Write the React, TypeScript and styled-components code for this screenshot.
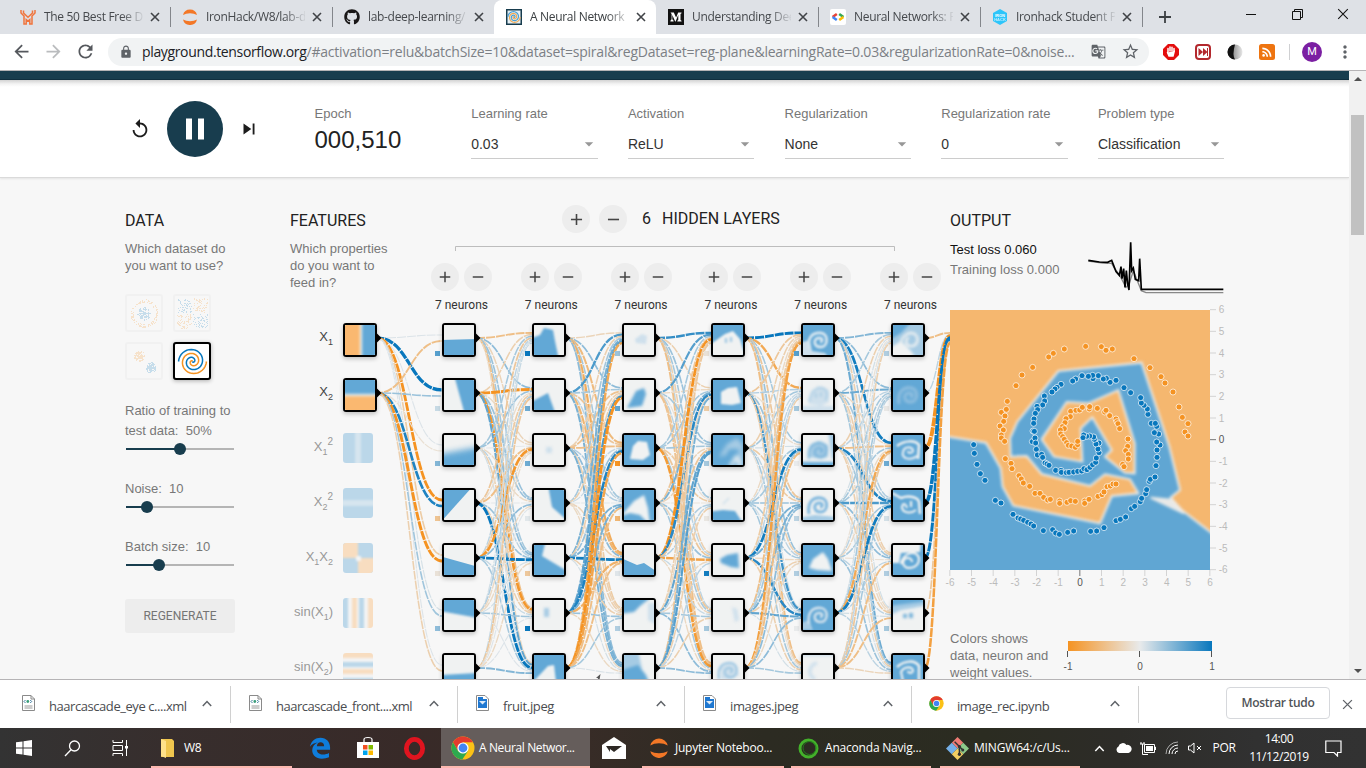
import React from 'react';
import styled, { createGlobalStyle } from 'styled-components';
import {
  MdArrowBack, MdArrowForward, MdRefresh, MdLock, MdStarBorder, MdGTranslate, MdMoreVert,
  MdReplay, MdPause, MdSkipNext, MdAdd, MdRemove, MdArrowDropDown, MdRssFeed,
} from 'react-icons/md';
import { FaGithub } from 'react-icons/fa';

const SEGOE = '"Open Sans", "Noto Sans", sans-serif';
const ARIAL = '"Liberation Sans", Arial, sans-serif';
const BLUE = '#62a8d6';
const ORANGE = '#fab870';

const Global = createGlobalStyle`
  * { box-sizing: border-box; }
  body { margin: 0; width: 1366px; height: 768px; overflow: hidden; background: #fff; font-family: ${ARIAL}; }
  svg { display: block; flex: none; }
`;

const Screen = styled.div`
  width: 1366px;
  height: 768px;
  display: flex;
  flex-direction: column;
  overflow: hidden;
`;

/* ---------- browser chrome ---------- */

const TabStrip = styled.div`
  height: 34px;
  flex: none;
  display: flex;
  padding-left: 8px;
  background: #dee1e6;
`;

const TabBox = styled.div<{ $active?: boolean; $line?: boolean }>`
  position: relative;
  width: 162px;
  height: 34px;
  display: flex;
  align-items: center;
  padding: 0 9px 0 12px;
  background: ${(p) => (p.$active ? '#fff' : 'transparent')};
  border-radius: 8px 8px 0 0;
  &::after {
    content: '';
    position: absolute;
    right: -1px;
    top: 7px;
    width: 1px;
    height: 20px;
    background: ${(p) => (p.$line ? '#83868b' : 'transparent')};
  }
`;

const TabTitle = styled.div<{ $active?: boolean }>`
  width: 99px;
  margin-left: 8px;
  overflow: hidden;
  white-space: nowrap;
  font: 12px/20px ${SEGOE};
  letter-spacing: -0.32px;
  color: ${(p) => (p.$active ? '#3c4043' : '#45484c')};
  mask-image: linear-gradient(90deg, #000 78%, transparent 102%);
`;

const Spacer = styled.div`
  flex: 1;
`;

const TabClose = styled.div`
  margin-left: 7px;
`;

const NewTab = styled.div`
  width: 46px;
  display: flex;
  align-items: center;
  justify-content: center;
`;

const WindowButton = styled.div`
  width: 46px;
  height: 28px;
  display: flex;
  align-items: center;
  justify-content: center;
`;

const Toolbar = styled.div`
  height: 37px;
  flex: none;
  display: flex;
  align-items: center;
  padding: 0 0 1px 11px;
  background: #fff;
  border-bottom: 1px solid #b6b4b6;
`;

const NavButton = styled.div<{ $dim?: boolean }>`
  width: 32px;
  color: ${(p) => (p.$dim ? '#babcbe' : '#55585d')};
`;

const Omnibox = styled.div`
  width: 1041px;
  height: 28px;
  margin-left: 1px;
  display: flex;
  align-items: center;
  padding: 0 9px 0 11px;
  border-radius: 14px;
  background: #f1f3f4;
  color: #5f6368;
`;

const Url = styled.div`
  margin-left: 9px;
  flex: 1;
  white-space: nowrap;
  font: 14px/20px ${SEGOE};
  letter-spacing: -0.213px;
  color: #7c8085;
  b { font-weight: 400; color: #202124; letter-spacing: -0.35px; }
`;

const OmniIcon = styled.div`
  margin-left: 15px;
`;

const Extensions = styled.div`
  display: flex;
  align-items: center;
  padding-left: 14px;
  gap: 16px;
`;

const Divider = styled.div`
  width: 1px;
  height: 16px;
  margin-left: -2px;
  background: #cfd0d2;
`;

const Avatar = styled.div`
  width: 20px;
  height: 20px;
  margin-left: -4px;
  border-radius: 50%;
  background: #7b1fa2;
  color: #fff;
  font: 11px/20px Roboto, sans-serif;
  text-align: center;
`;

const MenuDots = styled.div`
  margin-left: -3px;
  color: #5f6368;
`;

/* ---------- page ---------- */

const Viewport = styled.div`
  height: 608px;
  flex: none;
  display: flex;
  overflow: hidden;
`;

const Page = styled.div`
  width: 1349px;
  height: 608px;
  overflow: hidden;
  background: #f7f7f7;
`;

const HeaderBand = styled.div`
  height: 9px;
  background: #193d4e;
  border-bottom: 1px solid #123040;
`;

const Controls = styled.div`
  height: 98px;
  display: flex;
  padding-left: 129px;
  background: linear-gradient(#d3d3d3, #f4f4f4 4px, #fff 7px);
  border-bottom: 1px solid #dadada;
  box-shadow: 0 1px 2px rgba(0, 0, 0, 0.08);
`;

const Playback = styled.div`
  display: flex;
  align-items: center;
  width: 185.5px;
  color: #1c1c1c;
`;

const PlayButton = styled.div`
  width: 56px;
  height: 56px;
  margin: 0 15px 0 16px;
  display: flex;
  align-items: center;
  justify-content: center;
  border-radius: 50%;
  background: #183d4e;
  color: #fff;
`;

const ControlLabel = styled.div`
  margin-top: 25px;
  font: 13px/17px ${ARIAL};
  color: #777;
  white-space: nowrap;
`;

const Epoch = styled.div`
  width: 156.7px;
`;

const EpochValue = styled.div`
  margin-top: 4px;
  font: 24px/28px ${ARIAL};
  color: #222;
`;

const SelectBox = styled.div`
  width: 156.7px;
`;

const SelectValue = styled.div`
  width: 126.500px;
  height: 29px;
  margin-top: 8px;
  padding-bottom: 1px;
  display: flex;
  align-items: center;
  justify-content: space-between;
  border-bottom: 1px solid #ccc;
  font: 14px/20px ${ARIAL};
  color: #333;
  svg { color: #979797; margin-right: -1px; }
`;

const Main = styled.div`
  display: grid;
  grid-template-columns: 165px 660px 1fr;
  padding: 0 0 0 125px;
  height: 501px;
`;

const Column = styled.div`
  position: relative;
  padding-top: 32px;
`;

const Heading = styled.h3`
  margin: 0 0 8px;
  font: 400 16px/22px Roboto, sans-serif;
  color: #222;
`;

const Blurb = styled.p<{ $w: number }>`
  margin: 0;
  width: ${(p) => p.$w}px;
  font: 13px/17px ${ARIAL};
  color: #777;
`;

const Datasets = styled.div`
  display: grid;
  grid-template-columns: 38px 38px;
  gap: 10px;
  margin-top: 20px;
`;

const Dataset = styled.div<{ $on?: boolean }>`
  width: 38px;
  height: 38px;
  border-radius: 3px;
  border: 2px solid ${(p) => (p.$on ? '#000' : '#f1f1f1')};
  background: ${(p) => (p.$on ? '#fff' : 'transparent')};
  box-shadow: ${(p) => (p.$on ? '0 1px 4px rgba(0,0,0,.3)' : 'none')};
`;

const SliderLabel = styled.div`
  margin: 21px 0 -1px;
  font: 13px/20px ${ARIAL};
  color: #777;
  white-space: pre;
`;

const Track = styled.div<{ $at: number }>`
  position: relative;
  width: 108px;
  height: 18px;
  margin-left: 1px;
  background: linear-gradient(90deg, #183d4e ${(p) => p.$at}px, #b5b5b5 ${(p) => p.$at}px) 0 8px / 100% 2px no-repeat;
  &::after {
    content: '';
    position: absolute;
    left: ${(p) => p.$at - 6}px;
    top: 3px;
    width: 12px;
    height: 12px;
    border-radius: 50%;
    background: #183d4e;
  }
`;

const Regenerate = styled.div`
  width: 110px;
  height: 34px;
  margin-top: 25px;
  border-radius: 3px;
  background: #ededed;
  color: #757575;
  font: 400 12px/34px Roboto, sans-serif;
  text-align: center;
`;

/* ---------- network diagram ---------- */

const Diagram = styled.svg`
  position: absolute;
  left: 0;
  top: 0;
`;

const NodeBox = styled.div<{ $x: number; $y: number; $off?: boolean }>`
  position: absolute;
  left: ${(p) => p.$x - 290}px;
  top: ${(p) => p.$y - 178}px;
  width: ${(p) => (p.$off ? 30 : 34)}px;
  height: ${(p) => (p.$off ? 30 : 34)}px;
  border: ${(p) => (p.$off ? '0' : '2px solid #000')};
  border-radius: 3px;
  overflow: hidden;
  opacity: ${(p) => (p.$off ? 0.4 : 1)};
  box-shadow: ${(p) => (p.$off ? 'none' : '0 2px 4px rgba(0,0,0,.22)')};
`;

const RoundButton = styled.div`
  width: 28px;
  height: 28px;
  display: flex;
  align-items: center;
  justify-content: center;
  border-radius: 50%;
  background: #ededed;
  color: #444;
`;

const LayersHeader = styled.div`
  position: absolute;
  left: 272px;
  top: 27px;
  height: 28px;
  display: flex;
  align-items: center;
  gap: 9px;
  font: 400 16px/20px Roboto, sans-serif;
  color: #222;
  span { margin-left: 6px; }
  em { font-style: normal; margin-left: 2px; }
`;

const LayerControl = styled.div<{ $x: number }>`
  position: absolute;
  left: ${(p) => p.$x - 290}px;
  top: 85px;
  width: 61px;
`;

const LayerButtons = styled.div`
  display: flex;
  gap: 5px;
`;

const NeuronCount = styled.div`
  margin-top: 5px;
  font: 12px/18px Roboto, sans-serif;
  text-align: center;
  color: #333;
`;

type Shape = [string, string];
type Tile = { bg: string; blur: number; fills?: Shape[]; lines?: [string, string, number][] };

const W = '#f0f2f2';
const M = '#a6cbe4';
const L = '#cfe0ec';
const SPIRAL = 'M6 24C4 12 10 7 18 8C26 9 25 22 18 22C10 22 10 13 16 13C20 13 20 17 17 17';
const ARCH = 'M6 22C8 12 13 7 19 8C25 9 25 17 22 20M13 18V13M18 17V12';

const t = (bg: string, blur: number, fills: Shape[] = [], lines: [string, string, number][] = []): Tile =>
  ({ bg, blur, fills, lines });

const TILES: Tile[][] = [
  [
    t(W, 0.7, [[BLUE, 'M-5 15L35 14V35H-5Z']]),
    t(W, 0.8, [[BLUE, 'M10 -5H35V35H21Z']]),
    t(W, 3.2, [[BLUE, 'M-9 20L40 11V40H-9Z']]),
    t(W, 0.6, [[BLUE, 'M-5 -5H30L-5 34Z']]),
    t(W, 0.6, [[BLUE, 'M-5 11L35 22V35H-5Z']]),
    t(W, 0.9, [[BLUE, 'M-5 -5H35V18L-5 11Z']]),
    t(W, 0.9, [[BLUE, 'M-5 20L35 18V35H-5Z']]),
  ],
  [
    t(W, 1.3, [[BLUE, 'M-5 14L6 10L10 3L15 4L19 5L21 16L25 35H-5Z']]),
    t(W, 1.1, [[BLUE, 'M-5 23L14 13L22 35H-5Z']]),
    t(W, 1.6, [[L, 'M12 12H18V18H12Z']]),
    t(W, 0.9, [[BLUE, 'M14 -5H35V32L18 17Z']]),
    t(W, 1.2, [[BLUE, 'M-5 -5H12L8 11L35 27V35H-5Z']]),
    t(W, 1.6, [[M, 'M10 8H15V17H10Z']]),
    t(BLUE, 1.1, [[W, 'M-2 28L14 11L20 10L23 35H0Z']]),
  ],
  [
    t(W, 1.3, [[L, 'M11 14L18 9L23 11L22 19L12 18Z']]),
    t(W, 1.5, [[BLUE, 'M3 28L12 11L20 8L22 14L18 26Z']]),
    t(BLUE, 1.2, [[W, 'M9 11L14 6L23 7L26 20L19 25L6 24Z']]),
    t(BLUE, 1.6, [[W, 'M-3 26L10 11L20 5L24 18L26 35L16 25L6 23Z']]),
    t(W, 0.7, [[BLUE, 'M-5 12L13 20L20 18L35 28V35H-5Z']]),
    t(W, 1.8, [[BLUE, 'M-5 -5H30L16 6L10 12L-5 14Z'], [L, 'M24 3H34V26L24 20Z']]),
    t(W, 1.5, [[M, 'M-5 -5H14L18 14H-5Z'], [BLUE, 'M-5 16L14 10L22 20L28 35H-5Z']]),
  ],
  [
    t(BLUE, 1.2, [[W, 'M-5 21L12 9L20 6L27 14L30 24L35 35H-5Z']], [['M13 18V13M18 17V12', M, 2.4]]),
    t(BLUE, 1.2, [[W, 'M8 12L15 8L24 7L28 23L19 25L8 24Z']]),
    t(BLUE, 2, [[M, 'M6 22L14 9L24 3L30 10L30 35H22L26 14L16 14L13 20Z']], [['M17 32L23 22L28 30', W, 3]]),
    t(W, 1.3, [[BLUE, 'M-5 22L10 20L22 21L31 35H-5Z']], [['M10 14L16 8', L, 1.5]]),
    t(W, 1.6, [[BLUE, 'M7 14L14 10L25 8L26 23L18 22L8 18Z']]),
    t(W, 1.6, [[L, 'M19 7L24 9L26 20L22 22Z']]),
    t(W, 1.3, [[L, 'M8 24L8 12L16 7L24 10L26 20L18 25Z']], [[SPIRAL, M, 2.4]]),
  ],
  [
    t(BLUE, 1.3, [[L, 'M-5 18L7 15L9 26L22 28L27 35H-5Z']], [[SPIRAL, '#d6e6f0', 2.8]]),
    t(W, 1.5, [[L, 'M6 24L8 11L16 6L26 10L26 22L18 26Z'], [L, 'M-5 26H35V35H-5Z']], [[ARCH, M, 1.8]]),
    t(W, 1.4, [[M, 'M6 22L8 10L16 6L25 10L25 22L18 24Z'], [BLUE, 'M-5 27H35V35H-5Z'], [M, 'M25 -5H35V24H29Z']], [[SPIRAL, BLUE, 1.6]]),
    t(W, 1.3, [[M, 'M-5 28L12 25L35 27V35H-5Z']], [[SPIRAL, '#83b9de', 3]]),
    t(BLUE, 1.6, [[W, 'M6 23L10 14L20 7L25 14L29 26L14 25Z']]),
    t(BLUE, 1.3, [[M, 'M-5 24L6 20L10 30H-5Z']], [[SPIRAL, L, 2.6]]),
    t(W, 1.4, [[L, 'M-5 -5H35V1H-5Z']], [['M14 8C6 10 4 20 12 24', L, 3.5]]),
  ],
  [
    t(M, 1.4, [[BLUE, 'M-5 -5H20L8 8L-5 16Z'], [W, 'M-5 24L8 16L18 26L24 35H-5Z']], [['M7 22C8 10 16 6 22 9C27 14 24 22 17 21C12 20 12 13 16 13', W, 2.4]]),
    t(BLUE, 1.6, [], [[SPIRAL, '#91bfdf', 3]]),
    t(BLUE, 1.1, [], [['M4 11C12 5 22 5 26 10L25 24', W, 2.5], ['M24 21C18 26 8 24 10 17C11 11 20 11 20 16C19 19 15 18 15 16', '#dfeaf2', 2.3]]),
    t(BLUE, 1.1, [], [['M-1 3L8 8C16 5 25 7 26 12L27 24', W, 2.5], ['M23 20C18 24 9 23 9 17C10 12 13 14 14 18M18 11V17', W, 2.1]]),
    t(BLUE, 1.1, [[W, 'M-5 -5H28L27 7L8 8L6 18L-5 18Z']], [['M8 19C10 7 25 4 26 14C26 24 11 26 10 18C11 11 19 12 19 17', W, 2.2]]),
    t(W, 1.6, [[M, 'M-5 -5H35V5L20 8L8 10L-5 16Z'], [BLUE, 'M-5 -5H35V1L-5 6Z']], [['M12 18V14M18 18V13', BLUE, 3.4]]),
    t(BLUE, 1.1, [], [['M4 12C12 5 22 5 26 11L26 30', W, 2.5], ['M10 26L8 17C11 11 20 11 20 16C19 19 15 18 15 16', W, 2.1]]),
  ],
];

const FEATURE_TILES: Tile[] = [
  t(W, 1.4, [[ORANGE, 'M-5 -5H15V35H-5Z'], [BLUE, 'M17 -5H35V35H17Z']]),
  t(W, 1.4, [[BLUE, 'M-5 -5H35V14H-5Z'], [ORANGE, 'M-5 16H35V35H-5Z']]),
  t(BLUE, 0.8, [[M, 'M12 -5H18V35H12Z']]),
  t(BLUE, 0.8, [[M, 'M-5 12H35V18H-5Z']]),
  t(BLUE, 0.8, [[ORANGE, 'M-5 -5H15V15H-5ZM15 15H35V35H15Z'], [W, 'M13 13H18V18H13Z']]),
  t(W, 1.2, [[BLUE, 'M-5 -5H5V35H-5ZM16 -5H21V35H16Z'], [ORANGE, 'M9 -5H14V35H9ZM25 -5H35V35H25Z']]),
  t(W, 1.2, [[ORANGE, 'M-5 -5H35V5H-5ZM-5 16H35V21H-5Z'], [BLUE, 'M-5 9H35V14H-5ZM-5 25H35V35H-5Z']]),
];

const Heat = ({ tile, id }: { tile: Tile; id: string }) => (
  <svg width="30" height="30" viewBox="0 0 30 30">
    <filter id={id} x="-20" y="-20" width="70" height="70" filterUnits="userSpaceOnUse" colorInterpolationFilters="sRGB">
      <feGaussianBlur stdDeviation={tile.blur} />
    </filter>
    <rect width="30" height="30" fill={tile.bg} />
    <g filter={`url(#${id})`}>
      {(tile.fills || []).map(([c, d], i) => <path key={i} d={d} fill={c} />)}
      {(tile.lines || []).map(([d, c, w], i) => <path key={i} d={d} stroke={c} strokeWidth={w} fill="none" />)}
    </g>
  </svg>
);

const NODE_X = [442, 532, 622, 711, 801, 891];
const ROWS = [0, 1, 2, 3, 4, 5, 6];
const rowY = (r: number) => 323 + 55 * r;

/* WEIGHTS[layer][source][destination] */
const WEIGHTS: number[][][] = [
  [
    [0.06, 1.25, 0.05, -1.0, -0.35, 0.08, 0.05],
    [-0.5, 0.35, -0.12, 0.9, -1.1, 0.32, -0.3],
  ],
  [
    [-0.5, 0.4, -0.25, 0.35, 0.3, -0.5, -0.2],
    [-0.3, -1.1, -0.2, 0.35, 0.4, -0.95, 0.6],
    [0.3, 0.35, 0.02, -0.2, 0.2, -0.3, 0.1],
    [-0.4, -0.15, -0.5, 0.02, 0.35, -0.3, 1.05],
    [0.2, -0.35, -0.95, 0.4, 1.05, 0.15, 0.3],
    [0.1, 0.25, -0.2, -0.2, 0.1, 0.32, 0.05],
    [0.15, -0.4, -0.15, 0.05, -0.2, 0.05, 0.45],
  ],
  [
    [-0.25, 0.4, -0.55, 0.3, -0.7, -0.35, 0.4],
    [0.7, 0.3, -0.4, 0.2, -0.6, -0.3, 0.5],
    [-0.3, -0.45, -0.5, 0.25, 0.4, -0.3, 0.5],
    [0.3, -0.3, 0.15, 0.03, -0.25, -0.15, -0.2],
    [0.5, -0.3, 0.35, 0.5, 0.95, -0.3, 0.1],
    [0.6, 0.7, 0.9, 0.5, -0.65, 0.35, -0.2],
    [-0.75, -1.0, -0.8, -0.5, -0.5, 0.3, 0.06],
  ],
  [
    [0.8, -0.3, 0.35, 0.3, -0.3, 0.2, -0.5],
    [0.65, -0.2, 0.3, -0.1, 0.2, -0.4, -0.45],
    [0.3, 0.3, 0.3, -0.35, -0.4, 0.3, -0.9],
    [-0.4, 0.5, -0.25, -0.08, 0.35, -0.25, 0.3],
    [-1.1, 0.85, -0.4, 0.25, -0.8, 0.15, -0.2],
    [-0.3, -0.2, 0.6, 0.2, -0.2, 0.3, 0.4],
    [-0.4, 0.5, 0.65, -0.3, 0.2, -0.3, 0.4],
  ],
  [
    [1.05, -0.75, 0.3, -0.4, 0.35, 0.1, -0.5],
    [-0.4, 0.25, -0.15, 0.35, -0.3, 0.75, -0.3],
    [-0.3, 0.3, 0.1, -0.35, 0.2, 0.3, -0.1],
    [-0.2, 0.15, 0.3, 0.35, 0.3, 0.1, 0.3],
    [-0.35, 0.2, 0.95, 0.5, -0.2, 0.85, -0.3],
    [-0.5, 0.2, 0.3, 0.5, -0.3, 0.6, 0.1],
    [-0.85, -0.3, -0.5, 0.4, -0.2, 0.4, 0.3],
  ],
  [
    [0.45, 0.4, 0.95, 0.25, -0.3, 0.1, 0.55],
    [0.3, 0.55, -0.2, 0.3, -0.3, -0.2, 0.3],
    [-0.3, 0.2, -0.5, 0.9, 0.3, -0.2, -0.3],
    [0.1, 0.3, 0.3, 0.7, 0.4, -0.35, 0.1],
    [-0.1, 0.2, -0.2, 0.3, -0.1, 0.2, 0.35],
    [0.1, 0.3, -0.75, 0.95, 0.2, 0.1, 0.2],
    [-0.3, 0.2, -0.4, 0.3, -0.5, -0.5, -0.25],
  ],
  [[-0.5], [0.2], [-1.6], [1.4], [1.1], [-0.4], [-0.85]],
];

const BIASES = [
  [0.65, 0.15, 0.45, -0.45, -0.1, 0.4, 0.2],
  [1, 0.55, 0.55, 0.03, -0.4, 1, 0.2],
  [0.35, 0.6, -1, -0.6, 0.04, 0.25, 0.2],
  [-0.1, -0.35, 0.3, -0.05, 0.95, 0.3, 0.2],
  [0.65, 0.3, 0, 0.2, 0.25, 0, 0.1],
  [0.25, -0.03, 0.55, 0.1, 0.25, 0.3, 0.2],
];

const weightColor = (w: number) => {
  const mid = [232, 234, 235];
  const end = w < 0 ? [245, 147, 34] : [8, 119, 189];
  const a = Math.min(1, Math.abs(w));
  return `rgb(${mid.map((m, i) => Math.round(m + (end[i] - m) * a)).join(',')})`;
};

const Links = () => {
  const out: React.ReactElement[] = [];
  WEIGHTS.forEach((layer, l) => {
    const sx = l === 0 ? 377 : NODE_X[l - 1] + 34;
    const tx = l === 6 ? 950 : NODE_X[l];
    const mx = (sx + tx) / 2;
    layer.forEach((dests, s) => dests.forEach((w, d) => {
      const sy = rowY(s) + 15;
      const ty = rowY(d) + 15 + ((s - (layer.length - 1) / 2) / layer.length) * 12;
      out.push(
        <path
          key={`${l}-${s}-${d}`}
          d={`M${sx} ${sy}C${mx} ${sy} ${mx} ${ty} ${tx} ${ty}`}
          stroke={weightColor(w)}
          strokeWidth={1 + Math.abs(w) * 1.8}
          strokeDasharray="9 1"
          strokeDashoffset={(s * 3 + d * 2) % 10}
          fill="none"
        />,
      );
    }));
  });
  return <>{out}</>;
};

const FEATURES: [string, string, string, string][] = [
  ['X', '1', '', ''], ['X', '2', '', ''], ['X', '1', 'sup', ''], ['X', '2', 'sup', ''],
  ['X', '1', 'X', '2'], ['sin(X', '1', ')', ''], ['sin(X', '2', ')', ''],
];

const FeatureLabel = ({ row }: { row: number }) => {
  const [a, sub, b, sub2] = FEATURES[row];
  const y = rowY(row) + 18;
  return (
    <text x="333" y={y} textAnchor="end" fontFamily={ARIAL} fontSize="13" fill={row < 2 ? '#444' : '#999'}>
      {a}
      <tspan fontSize="9" dy="4">{sub}</tspan>
      {b === 'sup' ? <tspan fontSize="10" dy="-10">2</tspan> : b ? <tspan dy="-4">{b}</tspan> : null}
      {sub2 ? <tspan fontSize="9" dy="4">{sub2}</tspan> : null}
    </text>
  );
};

const Network = () => (
  <Column>
    <Heading>FEATURES</Heading>
    <Blurb $w={102}>Which properties do you want to feed in?</Blurb>
    <Diagram width="660" height="501" viewBox="290 178 660 501">
      <path d="M455.5 251V246.5H894.5V251" stroke="#bdbdbd" fill="none" />
      <Links />
      {ROWS.map((r) => <FeatureLabel key={r} row={r} />)}
      {[343, ...NODE_X].map((x, c) => ROWS.filter((r) => c > 0 || r < 2).map((r) => (
        <path key={`${c}-${r}`} d={`M${x + 33} ${rowY(r) + 9.5}L${x + 38.5} ${rowY(r) + 15}L${x + 33} ${rowY(r) + 20.5}Z`} />
      )))}
      {NODE_X.map((x, c) => ROWS.map((r) => (
        <rect key={`${c}-${r}`} x={x - 7} y={rowY(r) + 28} width="5" height="5" fill={weightColor(BIASES[c][r])} />
      )))}
      <path d="M600.5 674L596 678L598 678L597.5 680L599.5 680Z" fill="#555" />
    </Diagram>
    {FEATURE_TILES.map((tile, r) => (
      <NodeBox key={r} $x={343} $y={rowY(r)} $off={r > 1}><Heat tile={tile} id={`f${r}`} /></NodeBox>
    ))}
    {TILES.map((col, c) => col.map((tile, r) => (
      <NodeBox key={`${c}-${r}`} $x={NODE_X[c]} $y={rowY(r)}><Heat tile={tile} id={`n${c}-${r}`} /></NodeBox>
    )))}
    <LayersHeader>
      <RoundButton><MdAdd size={19} /></RoundButton>
      <RoundButton><MdRemove size={19} /></RoundButton>
      <span>6</span>
      <em>HIDDEN LAYERS</em>
    </LayersHeader>
    {[431, 520.8, 610.6, 700.4, 790.2, 880].map((x) => (
      <LayerControl key={x} $x={x}>
        <LayerButtons>
          <RoundButton><MdAdd size={18} /></RoundButton>
          <RoundButton><MdRemove size={18} /></RoundButton>
        </LayerButtons>
        <NeuronCount>7 neurons</NeuronCount>
      </LayerControl>
    ))}
  </Column>
);

/* ---------- dataset thumbnails ---------- */

const noise = (i: number) => {
  const v = Math.sin(i * 127.1 + 11.7) * 43758.5453;
  return v - Math.floor(v);
};

type Dot = [number, number, string];

const circleDots: Dot[] = Array.from({ length: 260 }, (_, i) => {
  const inner = i % 2 === 0;
  const a = noise(i) * 6.283;
  const r = inner ? noise(i + 500) * 7 : 11 + noise(i + 500) * 3;
  return [17 + Math.cos(a) * r, 17 + Math.sin(a) * r, inner ? '#0877bd' : '#f59322'];
});
const xorDots: Dot[] = Array.from({ length: 260 }, (_, i) => {
  const x = noise(i) * 28 - 14;
  const y = noise(i + 700) * 28 - 14;
  return [17 + x + Math.sign(x), 17 + y + Math.sign(y), x * y > 0 ? '#0877bd' : '#f59322'];
});
const gaussDots: Dot[] = Array.from({ length: 260 }, (_, i) => {
  const k = i % 2;
  const a = noise(i) * 6.283;
  const r = noise(i + 300) * 5.5;
  return [(k ? 23 : 12) + Math.cos(a) * r, (k ? 23 : 12) + Math.sin(a) * r, k ? '#0877bd' : '#f59322'];
});

const Thumb = ({ dots }: { dots: Dot[] }) => (
  <svg width="34" height="34" opacity="0.2" shapeRendering="crispEdges">
    {dots.map(([x, y, c], i) => <rect key={i} x={Math.round(x)} y={Math.round(y)} width="1" height="1" fill={c} />)}
  </svg>
);

const spiralPath = (phase: number, cx: number, cy: number, r: number) => {
  let d = '';
  for (let i = 0; i <= 60; i += 1) {
    const a = (i / 60) * 1.75 * 2 * Math.PI + phase;
    const rr = (i / 60) * r;
    d += `${i ? 'L' : 'M'}${(cx + rr * Math.sin(a)).toFixed(2)} ${(cy + rr * Math.cos(a)).toFixed(2)}`;
  }
  return d;
};

/* ---------- output panel ---------- */

const LossRow = styled.div`
  display: flex;
  height: 71px;
  margin-top: -1px;
`;

const LossText = styled.div`
  width: 137px;
  padding-top: 1px;
  font: 13px/20px ${ARIAL};
  color: #777;
  div:first-child { color: #111; }
`;

const PlotSvg = styled.svg`
  overflow: visible;
`;

const LegendRow = styled.div`
  display: flex;
  margin-top: 35px;
`;

const LegendText = styled.p`
  margin: 0;
  width: 107px;
  font: 13px/17px ${ARIAL};
  color: #777;
`;

const ORANGE_PTS = '403,447 467,439 514,440 528,451 547,447 370,460 356,471 308,502 276,525 258,557 232,604 214,637 229,628 225,648 221,664 210,678 220,690 214,705 214,714 224,724 226,776 243,790 246,806 267,827 274,837 280,849 299,859 315,880 330,880 341,892 353,900 361,898 389,903 389,910 411,907 422,902 436,904 464,903 464,910 477,898 504,889 516,884 522,876 531,860 541,858 549,852 558,852 612,476 660,503 693,530 705,549 729,576 747,621 757,652 774,671 765,696 774,708 422,634 438,631 449,630 457,622 478,627 479,620 502,625 524,636 528,631 539,647 558,657 561,665 564,671 569,686 421,650 408,656 405,668 397,680 403,686 391,690 392,702 398,710 403,718 410,728 415,736 425,738 436,742 443,734 443,724 594,717 593,739 587,752 595,763 595,777 578,793 582,800';
const BLUE_PTS = '131,734 133,760 141,793 151,821 165,841 196,901 213,909 249,943 264,954 272,957 281,961 293,967 303,972 311,978 340,992 368,989 377,999 388,1003 413,997 431,993 482,994 500,993 522,983 558,962 571,958 587,951 604,926 614,919 631,905 635,895 647,881 650,869 658,844 661,838 675,831 678,797 681,772 681,750 690,735 680,726 686,702 673,698 680,679 664,670 676,670 654,643 652,627 642,616 634,609 632,593 602,578 582,563 558,541 540,547 529,535 520,537 505,527 489,536 488,526 475,529 456,527 437,537 428,543 393,553 381,562 375,567 366,576 343,588 344,603 338,615 321,619 323,629 316,640 312,657 311,670 309,693 313,694 307,725 315,714 317,729 319,748 322,765 335,763 338,772 345,789 351,792 357,796 377,811 393,811 394,817 409,818 417,817 431,816 443,814 455,813 462,806 471,809 480,802 488,794 497,787 499,774 507,758 504,747 507,729 498,732 493,718 491,711 479,708 470,709 461,705 459,713';
const points = (s: string) => s.split(' ').map((p) => p.split(',').map(Number));

const OutputMap = () => (
  <PlotSvg width="290" height="285" viewBox="60 330 870 855">
    <defs>
      <clipPath id="plot"><rect x="60" y="330" width="780" height="780" /></clipPath>
      <filter id="soft" x="0" y="300" width="900" height="900" filterUnits="userSpaceOnUse" colorInterpolationFilters="sRGB"><feGaussianBlur stdDeviation="4" /></filter>
    </defs>
    <g clipPath="url(#plot)">
      <rect x="60" y="330" width="780" height="780" fill="#f5b76f" />
      <g filter="url(#soft)" stroke="#ececea" strokeWidth="6">
        <path d="M30 705L60 711L168 728L212 805L218 860L250 917L510 970L545 888L625 880L600 838L525 823L480 858L335 822L290 768L242 770L240 715L262 665L385 513L635 488L718 740L750 870L722 893L755 930L870 1018V1150H30Z" fill="#60a6d3" />
        <path d="M410 606L475 610L565 570L614 730L614 820L585 818L525 770L545 750L487 652L452 685L457 785L372 770L335 718Z" fill="#f5b76f" />
        <path d="M662 893L722 899L762 940Z" fill="#e8e8e6" />
      </g>
      {points(ORANGE_PTS).map(([x, y], i) => <circle key={i} cx={x} cy={y} r="9" fill="#f59322" stroke="#fff" strokeWidth="2.6" strokeOpacity=".8" />)}
      {points(BLUE_PTS).map(([x, y], i) => <circle key={i} cx={x} cy={y} r="9" fill="#0877bd" stroke="#fff" strokeWidth="2.6" strokeOpacity=".8" />)}
    </g>
    {Array.from({ length: 13 }, (_, i) => i - 6).map((v) => {
      const zero = v === 0;
      const x = 450 + v * 65;
      const y = 719 - v * 65;
      return (
        <g key={v} fontFamily={ARIAL} fontSize="30" fill={zero ? '#555' : '#bbb'} stroke="none">
          <path d={`M${x - 0.5} 1110V1128M840 ${y}H858`} stroke={zero ? '#777' : '#d3d3d3'} strokeWidth="3" />
          <text x={x} y="1158" textAnchor="middle">{v}</text>
          <text x="866" y={y + 11}>{v}</text>
        </g>
      );
    })}
  </PlotSvg>
);

const Output = () => (
  <Column>
    <Heading>OUTPUT</Heading>
    <LossRow>
      <LossText>
        <div>Test loss 0.060</div>
        <div>Training loss 0.000</div>
      </LossText>
      <svg width="137" height="56" viewBox="473 117 411 168" fill="none">
        <path d="M477 183L520 189L547 190L556 206L570 224L590 262L600 250L612 212L636 272L650 278H882" stroke="#888" strokeWidth="4" />
        <path d="M477 181L510 186L535 187L547 181L552 194L560 215L570 226L575 200L578 236L583 206L587 262L591 212L595 252L599 270L604 127L607 212L612 204L618 238L628 242L631 176L636 268H882" stroke="#000" strokeWidth="5" />
      </svg>
    </LossRow>
    <OutputMap />
    <LegendRow>
      <LegendText>Colors shows data, neuron and weight values.</LegendText>
      <svg width="170" height="55" viewBox="1057 625 170 55">
        <defs>
          <linearGradient id="scale">
            <stop offset="0" stopColor="#f59322" />
            <stop offset=".5" stopColor="#e8eaeb" />
            <stop offset="1" stopColor="#0877bd" />
          </linearGradient>
        </defs>
        <rect x="1068" y="636" width="144" height="10" fill="url(#scale)" />
        <path d="M1067.5 646V652M1139.5 646V652M1211.5 646V652" stroke="#555" />
        <g fontFamily={ARIAL} fontSize="10" fill="#555" textAnchor="middle">
          <text x="1068" y="665">-1</text>
          <text x="1140" y="665">0</text>
          <text x="1212" y="665">1</text>
        </g>
      </svg>
    </LegendRow>
  </Column>
);

const Scrollbar = styled.div`
  width: 17px;
  display: flex;
  flex-direction: column;
  align-items: center;
  background: #f1f1f1;
`;

const Thumbbar = styled.div`
  width: 13px;
  height: 120px;
  margin-top: 27px;
  background: #c1c1c1;
`;

const ScrollArrow = styled.div<{ $up?: boolean }>`
  height: 17px;
  display: flex;
  align-items: center;
  transform: ${(p) => (p.$up ? 'scaleY(-1)' : 'none')};
`;

/* ---------- downloads ---------- */

const Downloads = styled.div`
  height: 49px;
  flex: none;
  display: flex;
  align-items: center;
  background: #fff;
  border-top: 1px solid #b6b4b6;
`;

const DownloadItem = styled.div<{ $first?: boolean }>`
  width: ${(p) => (p.$first ? 231 : 227)}px;
  height: 37px;
  display: flex;
  align-items: center;
  padding: 0 18px 2px ${(p) => (p.$first ? 21 : 17)}px;
  border-right: 1px solid #d0d0d0;
`;

const FileName = styled.div<{ $ls?: number }>`
  flex: 1;
  margin: 5px 0 0 13px;
  white-space: nowrap;
  font: 13px/18px ${SEGOE};
  letter-spacing: ${(p) => p.$ls ?? -0.35}px;
  color: #4a4c50;
`;

const ShowAll = styled.div`
  width: 104px;
  height: 32px;
  margin: 0 12px 2px 0;
  border: 1px solid #d6d8dc;
  border-radius: 4px;
  text-align: center;
  white-space: nowrap;
  font: 600 12px/30px ${SEGOE};
  letter-spacing: -0.3px;
  color: #505357;
`;

const CloseSlot = styled.div`
  width: 24px;
`;

/* ---------- taskbar ---------- */

const TaskbarRoot = styled.div`
  height: 40px;
  flex: none;
  display: flex;
  align-items: center;
  background: linear-gradient(90deg, #333 0, #372e2d 12%, #382a28 30%, #382c27 42%, #2c2b22 56%, #2b2c21 72%, #2d2c28 82%, #313131 92%, #323232 100%);
  color: #fff;
  font: 12px/16px ${SEGOE};
`;

const TaskIcon = styled.div<{ $w: number }>`
  width: ${(p) => p.$w}px;
  height: 40px;
  flex: none;
  display: flex;
  align-items: center;
  justify-content: center;
`;

const TaskButton = styled.div<{ $w: number; $active?: boolean; $ml?: number; $ls?: number; $pad?: number; $gap?: number }>`
  width: ${(p) => p.$w}px;
  height: 40px;
  flex: none;
  margin-left: ${(p) => p.$ml || 0}px;
  display: flex;
  align-items: center;
  gap: ${(p) => p.$gap ?? 7}px;
  padding: 2px 0 0 ${(p) => p.$pad ?? 7}px;
  white-space: nowrap;
  letter-spacing: ${(p) => p.$ls ?? -0.4}px;
  background: ${(p) => (p.$active ? '#655d5b' : 'transparent')};
  border-bottom: 2px solid #fdb8b0;
`;

const Clock = styled.div`
  width: 74px;
  text-align: center;
  line-height: 18px;
  letter-spacing: -0.4px;
`;

const Lang = styled.div`
  width: 30px;
  margin-left: -3px;
  text-align: center;
  letter-spacing: -0.3px;
`;

const Cross = ({ s, w = 1.6, c = '#404347' }: { s: number; w?: number; c?: string }) => (
  <svg width={s} height={s} viewBox="0 0 10 10"><path d="M1 1L9 9M9 1L1 9" stroke={c} strokeWidth={w} /></svg>
);

const Chrome = ({ s }: { s: number }) => (
  <svg width={s} height={s} viewBox="0 0 24 24">
    <circle cx="12" cy="12" r="11.5" fill="#fbc116" />
    <path d="M12 6.3H22A11.5 11.5 0 0 0 2 6.2L7 15Z" fill="#e33b2e" />
    <path d="M2 6.2A11.5 11.5 0 0 0 11.3 23.5L17 15L12 17.5L7 15Z" fill="#2da94f" />
    <circle cx="12" cy="12" r="5.6" fill="#fff" />
    <circle cx="12" cy="12" r="4.4" fill="#4285f4" />
  </svg>
);

const Jupyter = ({ s }: { s: number }) => (
  <svg width={s} height={s} viewBox="0 0 16 16" fill="#f37726">
    <path d="M1 6A7.2 7.2 0 0 1 15 6A10 6 0 0 0 1 6Z" />
    <path d="M1 10.5A7.2 7.2 0 0 0 15 10.5A10 6 0 0 1 1 10.5Z" />
  </svg>
);

const XmlFile = () => (
  <svg width="15" height="16" viewBox="0 0 15 16">
    <path d="M1.5 .5H10L13.5 4V15.5H1.5Z" fill="#fff" stroke="#8a8a8a" />
    <path d="M10 .5V4H13.5" fill="none" stroke="#8a8a8a" />
    <path d="M4.500 5L3 6.500L4.500 8M9.200 5L10.700 6.500L9.200 8" fill="none" stroke="#3a7a9e" />
    <circle cx="6.8" cy="6.5" r="1.4" fill="#3a9e7a" />
    <path d="M3.500 11H11.500M3.500 13H11.500" stroke="#999" />
  </svg>
);

const ImageFile = () => (
  <svg width="15" height="16" viewBox="0 0 15 16">
    <path d="M1.5 .5H10L13.5 4V15.5H1.5Z" fill="#fff" stroke="#8a8a8a" />
    <rect x="3" y="4" width="9" height="9" fill="#1f78d1" />
    <path d="M4 6H11L7.500 9.500Z" fill="#fff" opacity=".85" />
    <path d="M3 3H8" stroke="#1f78d1" strokeWidth="2" />
  </svg>
);

const FAVICONS: React.ReactElement[] = [
  <svg key="0" width="16" height="16" viewBox="0 0 16 16" fill="none" stroke="#f0743c" strokeWidth="1.5">
    <path d="M1 1V4L4 7V15H6.2V10.5L8 12L9.8 10.5V15H12V7L15 4V1M3.5 1.5V4L8 8.2L12.5 4V1.5" />
  </svg>,
  <Jupyter key="1" s={16} />,
  <FaGithub key="2" size={16} color="#191717" />,
  <svg key="3" width="16" height="16" viewBox="0 0 16 16" fill="none">
    <rect x=".75" y=".75" width="14.5" height="14.5" fill="#e5f0f6" stroke="#183d4e" strokeWidth="1.5" />
    <path d={spiralPath(0, 8, 8, 6.2)} stroke="#4b9fd3" strokeWidth="1.2" />
    <path d={spiralPath(3.14, 8, 8, 6.2)} stroke="#f5a94f" strokeWidth="1.1" />
  </svg>,
  <svg key="4" width="16" height="16" viewBox="0 0 16 16">
    <rect width="16" height="16" fill="#111" />
    <path d="M2.500 3.500H5.800L8.100 8.600L10.200 3.500H13.500V4.200L12.500 5V11L13.500 11.800V12.500H9.300V11.800L10.300 11V5.800L7.600 12.500H7.200L4.300 6V10.300L5.600 11.800V12.500H2.400V11.800L3.600 10.300V5Z" fill="#fff" />
  </svg>,
  <svg key="5" width="16" height="16" viewBox="0 0 16 16" fill="none" strokeWidth="2.6">
    <rect width="16" height="16" rx="2" fill="#fff" />
    <path d="M6.8 5L2.6 8" stroke="#ea4335" /><path d="M2.6 8L6.8 11" stroke="#4285f4" />
    <path d="M9.2 5L13.4 8" stroke="#34a853" /><path d="M13.4 8L9.2 11" stroke="#fbbc05" />
  </svg>,
  <svg key="6" width="16" height="16" viewBox="0 0 16 16">
    <path d="M8 0L15 4V12L8 16L1 12V4Z" fill="#2dc5fa" />
    <g fontFamily={ARIAL} fontWeight="700" fontSize="4" fill="#fff" textAnchor="middle">
      <text x="8" y="7.5">IRON</text><text x="8" y="11.5" opacity=".7">HACK</text>
    </g>
  </svg>,
];

const TABS = [
  'The 50 Best Free D', 'IronHack/W8/lab-d', 'lab-deep-learning/', 'A Neural Network',
  'Understanding Dee', 'Neural Networks: F', 'Ironhack Student P',
];

const SELECTS: [string, string][] = [
  ['Learning rate', '0.03'], ['Activation', 'ReLU'], ['Regularization', 'None'],
  ['Regularization rate', '0'], ['Problem type', 'Classification'],
];

const Chevron = ({ w = 10, c = '#5f6368' }: { w?: number; c?: string }) => (
  <svg width={w} height="7" viewBox="0 0 10 7" fill="none"><path d="M.8 6L5 1.5L9.2 6" stroke={c} strokeWidth="1.5" /></svg>
);

export default function App() {
  return (
    <Screen>
      <Global />
      <TabStrip>
        {TABS.map((title, i) => (
          <TabBox key={title} $active={i === 3} $line={i !== 2 && i !== 3}>
            {FAVICONS[i]}
            <TabTitle $active={i === 3}>{title}</TabTitle>
            <TabClose><Cross s={10} /></TabClose>
          </TabBox>
        ))}
        <NewTab><svg width="12" height="12"><path d="M6 0V12M0 6H12" stroke="#3c4043" strokeWidth="1.8" /></svg></NewTab>
        <Spacer />
        <WindowButton><svg width="10" height="10"><path d="M0 5.5H10" stroke="#111" /></svg></WindowButton>
        <WindowButton>
          <svg width="11" height="11" fill="none" stroke="#111"><path d="M.5 2.5H8.5V10.5H.5ZM2.5 2.5V.5H10.5V8.5H8.5" /></svg>
        </WindowButton>
        <WindowButton><Cross s={12} w={0.9} c="#111" /></WindowButton>
      </TabStrip>
      <Toolbar>
        <NavButton><MdArrowBack size={21} /></NavButton>
        <NavButton $dim><MdArrowForward size={21} /></NavButton>
        <NavButton><MdRefresh size={21} /></NavButton>
        <Omnibox>
          <MdLock size={14} />
          <Url><b>playground.tensorflow.org</b>/#activation=relu&amp;batchSize=10&amp;dataset=spiral&amp;regDataset=reg-plane&amp;learningRate=0.03&amp;regularizationRate=0&amp;noise...</Url>
          <MdGTranslate size={15} />
          <OmniIcon><MdStarBorder size={19} /></OmniIcon>
        </Omnibox>
        <Extensions>
          <svg width="16" height="16" viewBox="0 0 16 16">
            <path d="M5 0H11L16 5V11L11 16H5L0 11V5Z" fill="#e40d0d" />
            <path d="M5 8V4.5M7 7V3M9 7V3.3M11 8V4.6M4.5 8.5L6 12H10L11.3 7" stroke="#fff" strokeWidth="1.5" fill="#fff" strokeLinecap="round" />
          </svg>
          <svg width="16" height="16" viewBox="0 0 16 16">
            <rect x="1" y="1" width="14" height="14" rx="3" fill="#fff" stroke="#b3282d" strokeWidth="2" />
            <path d="M3.5 4L8 8L3.5 12ZM8 4L12.5 8L8 12Z" fill="#b3282d" /><path d="M12.5 4V12" stroke="#b3282d" />
          </svg>
          <svg width="16" height="16" viewBox="0 0 16 16">
            <defs><linearGradient id="moon"><stop offset=".4" stopColor="#999" /><stop offset="1" stopColor="#e8e8e8" /></linearGradient></defs>
            <circle cx="8" cy="8" r="7.5" fill="url(#moon)" /><path d="M8 .5A7.5 7.5 0 0 0 8 15.500Q5 11 8 .5Z" fill="#111" />
          </svg>
          <svg width="16" height="16" viewBox="0 0 16 16">
            <rect width="16" height="16" rx="2.500" fill="#ee7410" />
            <MdRssFeed x="1" y="1" size={14} color="#fff" />
          </svg>
          <Divider />
          <Avatar>M</Avatar>
          <MenuDots><MdMoreVert size={20} /></MenuDots>
        </Extensions>
      </Toolbar>
      <Viewport>
        <Page>
          <HeaderBand />
          <Controls>
            <Playback>
              <MdReplay size={22} />
              <PlayButton><MdPause size={36} /></PlayButton>
              <MdSkipNext size={22} />
            </Playback>
            <Epoch>
              <ControlLabel>Epoch</ControlLabel>
              <EpochValue>000,510</EpochValue>
            </Epoch>
            {SELECTS.map(([label, value]) => (
              <SelectBox key={label}>
                <ControlLabel>{label}</ControlLabel>
                <SelectValue>{value}<MdArrowDropDown size={20} /></SelectValue>
              </SelectBox>
            ))}
          </Controls>
          <Main>
            <Column>
              <Heading>DATA</Heading>
              <Blurb $w={115}>Which dataset do you want to use?</Blurb>
              <Datasets>
                <Dataset><Thumb dots={circleDots} /></Dataset>
                <Dataset><Thumb dots={xorDots} /></Dataset>
                <Dataset><Thumb dots={gaussDots} /></Dataset>
                <Dataset $on>
                  <svg width="34" height="34" fill="none" strokeWidth="1.5">
                    <path d={spiralPath(Math.PI, 17.5, 17.5, 14)} stroke="#f59322" />
                    <path d={spiralPath(0, 17.5, 17.5, 14)} stroke="#0877bd" />
                  </svg>
                </Dataset>
              </Datasets>
              <SliderLabel>{'Ratio of training to\ntest data:  50%'}</SliderLabel>
              <Track $at={54} />
              <SliderLabel>{'Noise:  10'}</SliderLabel>
              <Track $at={21} />
              <SliderLabel>{'Batch size:  10'}</SliderLabel>
              <Track $at={33} />
              <Regenerate>REGENERATE</Regenerate>
            </Column>
            <Network />
            <Output />
          </Main>
        </Page>
        <Scrollbar>
          <ScrollArrow $up><svg width="8" height="4"><path d="M0 0H8L4 4Z" fill="#505050" /></svg></ScrollArrow>
          <Thumbbar />
          <Spacer />
          <ScrollArrow><svg width="8" height="4"><path d="M0 0H8L4 4Z" fill="#505050" /></svg></ScrollArrow>
        </Scrollbar>
      </Viewport>
      <Downloads>
        <DownloadItem $first><XmlFile /><FileName $ls={-0.44}>haarcascade_eye c....xml</FileName><Chevron /></DownloadItem>
        <DownloadItem><XmlFile /><FileName $ls={-0.48}>haarcascade_front....xml</FileName><Chevron /></DownloadItem>
        <DownloadItem><ImageFile /><FileName>fruit.jpeg</FileName><Chevron /></DownloadItem>
        <DownloadItem><ImageFile /><FileName>images.jpeg</FileName><Chevron /></DownloadItem>
        <DownloadItem><Chrome s={15} /><FileName $ls={-0.42}>image_rec.ipynb</FileName><Chevron /></DownloadItem>
        <Spacer />
        <ShowAll>Mostrar tudo</ShowAll>
        <CloseSlot><Cross s={11} w={1.2} c="#5f6368" /></CloseSlot>
      </Downloads>
      <TaskbarRoot>
        <TaskIcon $w={48}>
          <svg width="16" height="16" fill="#fff"><path d="M0 2.300L6.500 1.400V7.500H0ZM7.500 1.200L16 0V7.500H7.500ZM0 8.500H6.500V14.600L0 13.700ZM7.500 8.500H16V16L7.500 14.800Z" /></svg>
        </TaskIcon>
        <TaskIcon $w={48}>
          <svg width="17" height="17" fill="none" stroke="#fff" strokeWidth="1.3"><circle cx="10.500" cy="6" r="5" /><path d="M7 9.700L1 16" /></svg>
        </TaskIcon>
        <TaskIcon $w={48}>
          <svg width="17" height="16" fill="none" stroke="#fff"><path d="M1 5.500H10.500V10.500H1ZM1 0V2.500H10.500V0M1 16V13.500H10.500V16M14.500 0V16" /><path d="M13 6H16V8.500H13Z" fill="#fff" stroke="none" /></svg>
        </TaskIcon>
        <TaskButton $w={141} $ml={7} $gap={6}>
          <svg width="20" height="22" viewBox="0 0 20 22"><path d="M3 2H14L16 4V20H3Z" fill="#f0c64e" /><path d="M3 2L8 4V21L3 19Z" fill="#ffe28a" /></svg>
          W8
        </TaskButton>
        <TaskIcon $w={56}>
          <svg width="22" height="22" viewBox="0 0 24 24">
            <path d="M1 10.700C2.500 4 7 .8 12.500 .8C19 .8 23 5.500 23 11.500V14H8.500C8.700 17.500 11.800 19.200 15 19.200C17.800 19.200 20 18.500 21.800 17.500V22C19.500 23 17 23.600 14 23.600C7.500 23.600 3.500 19.800 3.500 14.500C3.500 10.500 6 7.500 9.500 6C6 6.200 3 8 1 10.700ZM8.600 10H16.500C16.500 7.500 15 5.800 12.600 5.800C10.300 5.800 8.800 7.500 8.600 10Z" fill="#0f7ddb" fillRule="evenodd" />
          </svg>
        </TaskIcon>
        <TaskIcon $w={40}>
          <svg width="24" height="24" viewBox="0 0 24 24">
            <path d="M8 7V3.500C8 .8 16 .8 16 3.500V7" fill="none" stroke="#fff" strokeWidth="1.200" />
            <path d="M1 6H23V22H1Z" fill="#fff" />
            <path d="M7 9H11.500V13.500H7Z" fill="#f25022" /><path d="M12.500 9H17V13.500H12.500Z" fill="#7fba00" />
            <path d="M7 14.500H11.500V19H7Z" fill="#00a4ef" /><path d="M12.500 14.500H17V19H12.500Z" fill="#ffb900" />
          </svg>
        </TaskIcon>
        <TaskIcon $w={53}>
          <svg width="23" height="23" viewBox="0 0 24 24"><ellipse cx="12" cy="12" rx="8.500" ry="9.500" fill="none" stroke="#e0141f" strokeWidth="5" /></svg>
        </TaskIcon>
        <TaskButton $w={149} $active $ls={-0.38} $pad={10} $gap={4}>
          <Chrome s={24} />
          A Neural Networ...
        </TaskButton>
        <TaskIcon $w={48}>
          <svg width="24" height="22" viewBox="0 0 24 22"><path d="M0 8L12 0L24 8V22H0Z" fill="#fff" /><path d="M4 9H20L12 15L8 12L8 15Z" fill="#2e2925" /></svg>
        </TaskIcon>
        <TaskButton $w={142} $ml={4} $ls={-0.24} $gap={6}><Jupyter s={20} />Jupyter Noteboo...</TaskButton>
        <TaskButton $w={140} $ml={7} $ls={-0.2} $gap={6}>
          <svg width="21" height="21" viewBox="0 0 21 21"><circle cx="10.500" cy="10.500" r="8.500" fill="none" stroke="#43b02a" strokeWidth="3" /><circle cx="11.500" cy="10" r="6.500" fill="none" stroke="#247c1c" strokeWidth="1" /></svg>
          Anaconda Navig...
        </TaskButton>
        <TaskButton $w={140} $ml={9} $ls={-0.17} $pad={6} $gap={5}>
          <svg width="23" height="23" viewBox="0 0 24 24">
            <path d="M12 0L18 6L12 12L6 6Z" fill="#ee7b74" /><path d="M6 6L12 12L6 18L0 12Z" fill="#75b0e8" />
            <path d="M18 6L24 12L18 18L12 12Z" fill="#8dc98a" /><path d="M12 12L18 18L12 24L6 18Z" fill="#f3cf62" />
            <path d="M9 5L14 10V18M14 10L17 13" stroke="#333" strokeWidth="1.500" fill="none" />
            <circle cx="14" cy="10" r="1.700" fill="#333" /><circle cx="14" cy="18" r="1.700" fill="#333" /><circle cx="17.500" cy="13.500" r="1.600" fill="#333" />
          </svg>
          MINGW64:/c/Us...
        </TaskButton>
        <TaskIcon $w={38}><Chevron w={11} c="#fff" /></TaskIcon>
        <TaskIcon $w={10}>
          <svg width="17" height="12" viewBox="0 0 17 12"><path d="M4 11A3.500 3.500 0 0 1 3.500 4.500A4.500 4.500 0 0 1 11.500 3A4 4 0 0 1 13.500 11Z" fill="#fff" /></svg>
        </TaskIcon>
        <TaskIcon $w={38}>
          <svg width="17" height="14" viewBox="0 0 17 14" fill="none" stroke="#fff"><path d="M5.500 3.500H15.500V11.500H5.500ZM15.500 6H16.500V9" /><path d="M7 5H14V10H7Z" fill="#fff" stroke="none" /><path d="M1 3H6M2 1V3M5 1V3M3.500 3V13.500H9" /></svg>
        </TaskIcon>
        <TaskIcon $w={11}>
          <svg width="14" height="14" viewBox="0 0 14 14" fill="none" stroke="#fff"><path d="M1 13A12 12 0 0 1 13 1" opacity=".6" /><path d="M4 13A9 9 0 0 1 13 4M7 13A6 6 0 0 1 13 7M10 13A3 3 0 0 1 13 10" /></svg>
        </TaskIcon>
        <TaskIcon $w={35}>
          <svg width="14" height="12" viewBox="0 0 14 12" fill="none" stroke="#fff"><path d="M.5 4H2.500L6 1V11L2.500 8H.5ZM9 4L13 8M13 4L9 8" /></svg>
        </TaskIcon>
        <Lang>POR</Lang>
        <Spacer />
        <Clock>14:00<br />11/12/2019</Clock>
        <TaskIcon $w={34}>
          <svg width="17" height="17" viewBox="0 0 17 17" fill="none" stroke="#fff" strokeWidth="1.200"><path d="M.8 1H16V12.500H12.500V16L9 12.500H.8Z" /></svg>
        </TaskIcon>
        <TaskIcon $w={16} />
      </TaskbarRoot>
    </Screen>
  );
}
